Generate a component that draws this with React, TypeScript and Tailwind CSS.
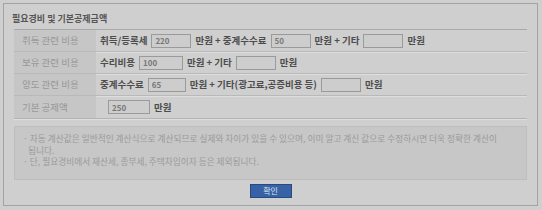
import React from "react";

const font = { fontFamily: '"Noto Sans CJK KR", "Noto Sans", sans-serif' };

function Field({ value, w = "w-[40px]" }: { value?: string; w?: string }) {
  return (
    <input
      readOnly
      value={value ?? ""}
      className={`${w} h-[14px] border border-[#9a9a9a] bg-[#cdcdcd] px-[3px] text-[8px] text-[#777] outline-none`}
    />
  );
}

function Row({ label, children, last }: { label: string; children: React.ReactNode; last?: boolean }) {
  return (
    <div className={`flex h-[22px] ${last ? "" : "border-b border-[#b9b9b9] shadow-[0_1px_0_#dedede]"}`}>
      <div className="flex w-[82px] items-center bg-[#c6c6c6] pl-[8px] text-[9.5px] text-[#989898]">{label}</div>
      <div className="flex flex-1 items-center gap-[4px] pl-[4px] text-[9.5px] font-bold text-[#4d4d4d]">{children}</div>
    </div>
  );
}

export default function App() {
  return (
    <div className="h-[210px] w-[542px] bg-[#cfcfcf] p-[3px]" style={font}>
      <div className="h-[203px] w-[535px] border border-[#a3a3a3] pt-[8px]">
        <div className="pl-[8px] text-[9px] font-bold leading-[14px] text-[#555]">필요경비 및 기본공제금액</div>
        <div className="ml-[10px] mt-[3px] w-[513px] border-t border-[#a9a9a9]">
          <Row label="취득 관련 비용">
            <span>취득/등록세</span>
            <Field value="220" />
            <span>만원 + 중계수수료</span>
            <Field value="50" />
            <span>만원 + 기타</span>
            <Field />
            <span>만원</span>
          </Row>
          <Row label="보유 관련 비용">
            <span>수리비용</span>
            <Field value="100" w="w-[44px]" />
            <span>만원 + 기타</span>
            <Field />
            <span>만원</span>
          </Row>
          <Row label="양도 관련 비용">
            <span>중계수수료</span>
            <Field value="65" w="w-[38px]" />
            <span>만원 + 기타(광고료,공증비용 등)</span>
            <Field />
            <span>만원</span>
          </Row>
          <Row label="기본 공제액" last>
            <span className="w-[4px]" />
            <Field value="250" w="w-[42px]" />
            <span>만원</span>
          </Row>
          <div className="border-t border-[#b3b3b3] shadow-[0_1px_0_#dedede]" />
          <div className="mt-[7px] h-[54px] border border-[#bdbdbd] bg-[#c7c7c7] pl-[8px] pt-[6px] text-[8.7px] leading-[11.5px] text-[#9a9a9a]">
            <div className="whitespace-nowrap">· 자동 계산값은 일반적인 계산식으로 계산되므로 실제와 차이가 있을 수 있으며, 이미 알고 계신 값으로 수정하시면 더욱 정확한 계산이</div>
            <div className="pl-[5px]">됩니다.</div>
            <div>· 단, 필요경비에서 재산세, 종부세, 주택차입이자 등은 제외됩니다.</div>
          </div>
          <div className="mt-[4px] flex justify-center">
            <button className="h-[14px] w-[42px] border border-[#274b80] bg-[#3763a6] text-[8px] leading-[12px] text-[#d8e0ee]">확인</button>
          </div>
        </div>
      </div>
    </div>
  );
}
